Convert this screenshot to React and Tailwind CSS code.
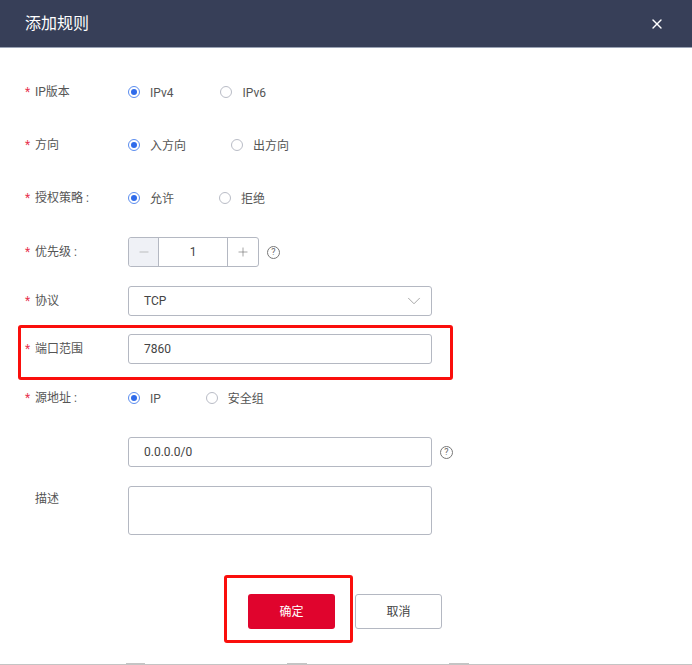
import React from 'react';
import { X, ChevronDown, Minus, Plus } from 'lucide-react';

const FONT = "font-['Roboto','Noto_Sans_CJK_SC',sans-serif]";

function Radio({ checked, label }) {
  return (
    <label className="flex items-center gap-[10px]">
      {checked ? (
        <span className="flex h-[12px] w-[12px] items-center justify-center rounded-full border border-[#5b8def]">
          <span className="h-[6px] w-[6px] rounded-full bg-[#2f6bea]"></span>
        </span>
      ) : (
        <span className="h-[12px] w-[12px] rounded-full border border-[#b9bcc6]"></span>
      )}
      <span className="pt-[2px] text-[12px] leading-none text-[#555]">{label}</span>
    </label>
  );
}

function Row({ label, required = true, className = '', children }) {
  return (
    <div className={`flex items-center pl-[25px] ${className}`}>
      <div className="flex w-[103px] shrink-0 items-center text-[12px] text-[#555]">
        <span className="w-[10px] text-[#e8334f]">{required ? '*' : ''}</span>
        <span>{label}</span>
      </div>
      {children}
    </div>
  );
}

function Help() {
  return (
    <span className="ml-[8px] flex h-[13px] w-[13px] items-center justify-center rounded-full border border-[#777] text-[9px] leading-none text-[#666]">
      ?
    </span>
  );
}

export default function App() {
  return (
    <div className={`relative h-[665px] w-[692px] overflow-hidden bg-white ${FONT}`}>
      <div className="flex h-[48px] items-center justify-between border-b border-b-[#9aa3b5] bg-[#373f58] pr-[27px] pl-[25px]">
        <span className="text-[16px] text-white">添加规则</span>
        <X size={16} strokeWidth={2} className="text-white" />
      </div>

      <Row label="IP版本" className="mt-[36px] h-[16px]">
        <div className="flex gap-[47px]">
          <Radio checked label="IPv4" />
          <Radio label="IPv6" />
        </div>
      </Row>

      <Row label="方向" className="mt-[37px] h-[16px]">
        <div className="flex gap-[45px]">
          <Radio checked label="入方向" />
          <Radio label="出方向" />
        </div>
      </Row>

      <Row label="授权策略 :" className="mt-[37px] h-[16px]">
        <div className="flex gap-[45px]">
          <Radio checked label="允许" />
          <Radio label="拒绝" />
        </div>
      </Row>

      <Row label="优先级 :" className="mt-[31px] h-[30px]">
        <div className="flex h-[30px] w-[131px] items-center rounded-[3px] border border-[#b4b8c2] text-[12px] text-[#444]">
          <span className="flex h-full w-[30px] items-center justify-center rounded-l-[3px] border-r border-r-[#b4b8c2] bg-[#eff1f6]">
            <Minus size={14} strokeWidth={1} className="text-[#999]" />
          </span>
          <span className="flex-1 text-center">1</span>
          <span className="flex h-full w-[31px] items-center justify-center border-l border-l-[#b4b8c2]">
            <Plus size={14} strokeWidth={1} className="text-[#666]" />
          </span>
        </div>
        <Help />
      </Row>

      <Row label="协议" className="mt-[19px] h-[30px]">
        <div className="flex h-[30px] w-[304px] items-center justify-between rounded-[3px] border border-[#b4b8c2] pr-[6px] pl-[15px] text-[12px] text-[#444]">
          <span>TCP</span>
          <ChevronDown size={22} strokeWidth={0.8} className="text-[#888]" />
        </div>
      </Row>

      <Row label="端口范围" className="mt-[18px] h-[30px]">
        <div className="flex h-[30px] w-[304px] items-center rounded-[3px] border border-[#b4b8c2] pl-[15px] text-[12px] text-[#444]">
          7860
        </div>
      </Row>

      <Row label="源地址 :" className="mt-[26px] h-[16px]">
        <div className="flex gap-[45px]">
          <Radio checked label="IP" />
          <Radio label="安全组" />
        </div>
      </Row>

      <Row label="" required={false} className="mt-[31px] h-[30px]">
        <div className="flex h-[30px] w-[304px] items-center rounded-[3px] border border-[#b4b8c2] pl-[15px] text-[12px] text-[#444]">
          0.0.0.0/0
        </div>
        <Help />
      </Row>

      <div className="mt-[19px] flex pl-[25px]">
        <div className="flex w-[103px] shrink-0 pt-[4px] pl-[10px] text-[12px] text-[#555]">描述</div>
        <div className="h-[49px] w-[304px] rounded-[3px] border border-[#b4b8c2]"></div>
      </div>

      <div className="mt-[59px] flex pl-[248px]">
        <button className="h-[35px] w-[87px] rounded-[3px] bg-[#e0042d] text-[12px] text-white">确定</button>
        <button className="ml-[20px] h-[35px] w-[87px] rounded-[3px] border border-[#b4b8c2] bg-white text-[12px] text-[#444]">取消</button>
      </div>

      {/* 底部被截断的表格 */}
      <div className="mt-[34px] flex h-[2px] border-b border-b-[#c4c4c4] pl-[126px]">
        <span className="h-[1px] w-[19px] bg-[#c4c4c4]"></span>
        <span className="ml-[142px] h-[1px] w-[20px] bg-[#c4c4c4]"></span>
        <span className="ml-[142px] h-[1px] w-[20px] bg-[#c4c4c4]"></span>
      </div>

      {/* 红框标注 */}
      <div className="absolute top-[325px] left-[18px] h-[55px] w-[435px] rounded-[3px] border-[3px] border-[#fa0f0c]"></div>
      <div className="absolute top-[575px] left-[224px] h-[68px] w-[129px] rounded-[3px] border-[3px] border-[#fa0f0c]"></div>
    </div>
  );
}
